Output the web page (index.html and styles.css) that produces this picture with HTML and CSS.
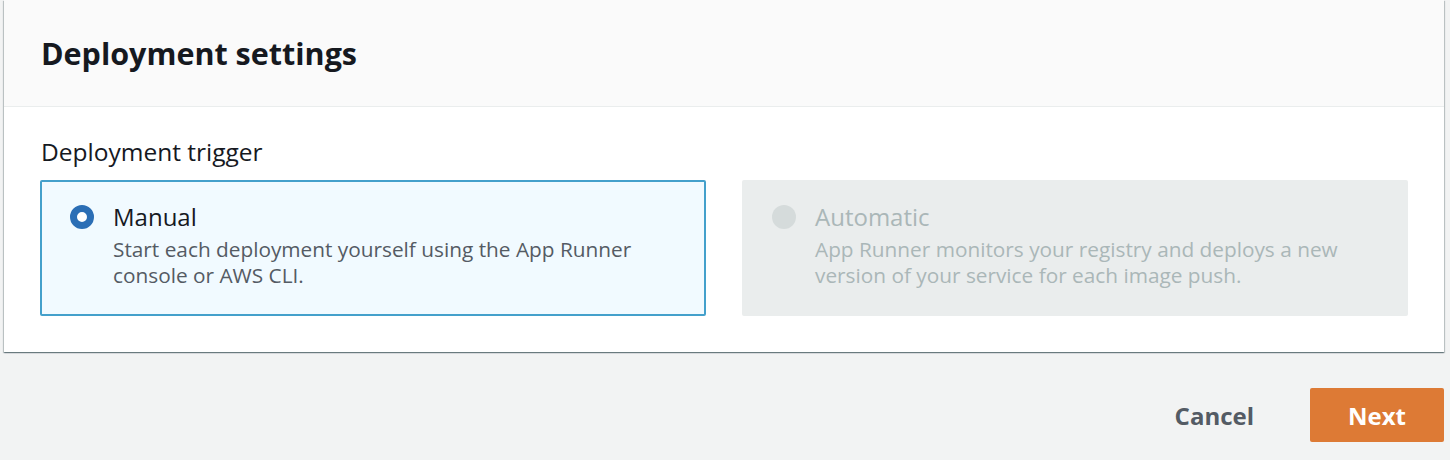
FILE: index.html
```html
<!DOCTYPE html>
<html lang="en">
<head>
<meta charset="utf-8">
<title>Deployment settings</title>
<link rel="stylesheet" href="styles.css">
</head>
<body>
<div class="page">
  <section class="card">
    <header class="card-header">
      <h2 class="card-title">Deployment settings</h2>
    </header>
    <div class="card-body">
      <div class="field-label">Deployment trigger</div>
      <div class="tiles">
        <div class="tile tile-selected">
          <span class="radio radio-checked"></span>
          <div class="tile-text">
            <div class="tile-title">Manual</div>
            <div class="tile-desc">Start each deployment yourself using the App Runner console or AWS CLI.</div>
          </div>
        </div>
        <div class="tile tile-disabled">
          <span class="radio radio-disabled"></span>
          <div class="tile-text">
            <div class="tile-title">Automatic</div>
            <div class="tile-desc">App Runner monitors your registry and deploys a new version of your service for each image push.</div>
          </div>
        </div>
      </div>
    </div>
  </section>
  <div class="actions">
    <button class="btn btn-link">Cancel</button>
    <button class="btn btn-primary">Next</button>
  </div>
</div>
</body>
</html>
```

FILE: styles.css
```css
* { box-sizing: border-box; }
html, body { margin: 0; padding: 0; }
body {
  background: #f2f3f3;
  font-family: "Open Sans", "Liberation Sans", sans-serif;
  color: #16191f;
}
.page {
  padding: 0 6px 0 4px;
}
.card {
  background: #ffffff;
  box-shadow: 0 1px 1px 0 rgba(0, 28, 36, 0.35), 1px 1px 1px 0 rgba(0, 28, 36, 0.18), -1px 1px 1px 0 rgba(0, 28, 36, 0.18);
}
.card-header {
  height: 107px;
  background: #fafafa;
  border-bottom: 1px solid #eaeded;
  display: flex;
  align-items: center;
  padding-left: 37px;
}
.card-title {
  margin: 0;
  font-size: 30.5px;
  font-weight: 700;
  line-height: 36px;
  color: #16191f;
}
.card-body {
  padding: 30px 36px 36px 36px;
}
.field-label {
  font-size: 24.5px;
  line-height: 30px;
  color: #16191f;
  padding-left: 1px;
  margin-bottom: 13px;
}
.tiles {
  display: grid;
  grid-template-columns: 1fr 1fr;
  column-gap: 36px;
}
.tile {
  height: 136px;
  border-radius: 2px;
  display: flex;
  align-items: flex-start;
  padding: 20px 20px 0 28px;
  border: 2px solid transparent;
}
.tile-selected {
  background: #f1faff;
  border-color: #44a0cb;
}
.tile-disabled {
  background: #eaeded;
}
.radio {
  flex: none;
  width: 24px;
  height: 24px;
  border-radius: 50%;
  margin-top: 3px;
  margin-right: 19px;
}
.radio-checked {
  border: 7px solid #2b6eb5;
  background: #ffffff;
}
.radio-disabled {
  background: #d5dbdb;
}
.tile-text {
  display: flex;
  flex-direction: column;
  max-width: 548px;
}
.tile-title {
  font-size: 24px;
  line-height: 30px;
  color: #16191f;
}
.tile-desc {
  font-size: 20.8px;
  line-height: 26px;
  margin-top: 4px;
  color: #545b64;
}
.tile-disabled .tile-title,
.tile-disabled .tile-desc {
  color: #aab7b8;
}
.actions {
  display: flex;
  justify-content: flex-end;
  align-items: center;
  padding-top: 36px;
  gap: 36px;
}
.btn {
  font-family: inherit;
  font-size: 24px;
  font-weight: 700;
  border: none;
  cursor: pointer;
  height: 54px;
  border-radius: 2px;
}
.btn-link {
  background: transparent;
  color: #545b64;
  padding: 0 20px;
}
.btn-primary {
  background: #dd7a35;
  color: #ffffff;
  width: 134px;
  padding: 0;
}
```
